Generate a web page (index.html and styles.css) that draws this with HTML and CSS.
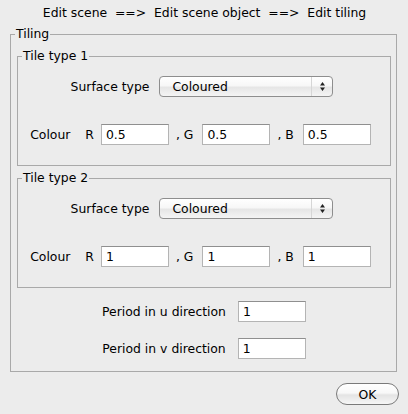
FILE: index.html
```html
<!DOCTYPE html>
<html>
<head>
<meta charset="utf-8">
<link rel="stylesheet" href="styles.css">
</head>
<body>
<div class="title">Edit scene  ==&gt;  Edit scene object  ==&gt;  Edit tiling</div>
<fieldset class="group outer">
  <legend class="outer-legend">Tiling</legend>
  <fieldset class="group tile">
    <legend class="tile-legend">Tile type 1</legend>
    <div class="row surface-row">
      <span class="label">Surface type</span>
      <div class="select"><span class="select-text">Coloured</span><span class="select-arrows"><svg width="7" height="11" viewBox="0 0 7 11"><path d="M3.5 1 L6 4.5 L1 4.5 Z M3.5 10 L6 6.5 L1 6.5 Z" fill="#222"/></svg></span></div>
    </div>
    <div class="row colour-row">
      <span class="colour-label">Colour</span>
      <span class="comp comp-r">R</span>
      <input class="field" value="0.5">
      <span class="comp">, G</span>
      <input class="field" value="0.5">
      <span class="comp">, B</span>
      <input class="field" value="0.5">
    </div>
  </fieldset>
  <fieldset class="group tile tile2">
    <legend class="tile-legend">Tile type 2</legend>
    <div class="row surface-row">
      <span class="label">Surface type</span>
      <div class="select"><span class="select-text">Coloured</span><span class="select-arrows"><svg width="7" height="11" viewBox="0 0 7 11"><path d="M3.5 1 L6 4.5 L1 4.5 Z M3.5 10 L6 6.5 L1 6.5 Z" fill="#222"/></svg></span></div>
    </div>
    <div class="row colour-row">
      <span class="colour-label">Colour</span>
      <span class="comp comp-r">R</span>
      <input class="field" value="1">
      <span class="comp">, G</span>
      <input class="field" value="1">
      <span class="comp">, B</span>
      <input class="field" value="1">
    </div>
  </fieldset>
  <div class="row period-row period-u">
    <span class="label">Period in u direction</span>
    <input class="field" value="1">
  </div>
  <div class="row period-row period-v">
    <span class="label">Period in v direction</span>
    <input class="field" value="1">
  </div>
</fieldset>
<div class="footer">
  <button class="ok">OK</button>
</div>
</body>
</html>
```

FILE: styles.css
```css
html, body {
  margin: 0;
  padding: 0;
  background: #ececec;
}
body {
  font-family: "DejaVu Sans", "Liberation Sans", sans-serif;
  font-size: 12.4px;
  color: #000;
  width: 408px;
  height: 414px;
  overflow: hidden;
}
.title {
  height: 26px;
  line-height: 26px;
  text-align: center;
  white-space: pre;
  padding-left: 1px;
}
.group {
  margin: 0;
  min-width: 0;
  border: 1px solid #a9a9a9;
  box-sizing: border-box;
}
.group > legend {
  padding: 0 1px;
  line-height: 16px;
  height: 16px;
}
.outer {
  margin-left: 10px;
  width: 387px;
  padding: 6px 5px 12px 6px;
}
.outer-legend {
  margin-left: -2px;
}
.tile {
  width: 374px;
  padding: 12px 0 20px 0;
}
.tile-legend {
  margin-left: 4px;
}
.tile2 {
  margin-top: 4px;
}
.row {
  display: flex;
  align-items: center;
  justify-content: center;
}
.surface-row {
  height: 21px;
  gap: 10px;
  padding-right: 4px;
}
.select {
  width: 174px;
  height: 21px;
  box-sizing: border-box;
  border: 1px solid #8e8e8e;
  border-radius: 4px;
  background: linear-gradient(#ffffff 0%, #f7f7f7 45%, #e6e6e6 55%, #f4f4f4 100%);
  display: flex;
  align-items: center;
  position: relative;
}
.select-text {
  padding-left: 12px;
  flex: 1;
}
.select-arrows {
  width: 20px;
  height: 19px;
  border-left: 1px solid #d6d6d6;
  display: flex;
  align-items: center;
  justify-content: center;
}
.colour-row {
  margin-top: 27px;
  height: 21px;
  padding-right: 7px;
}
.colour-label {
  margin-right: 15px;
}
.comp {
  margin-left: 7px;
  margin-right: 9px;
}
.comp-r {
  margin-left: 0;
  margin-right: 7px;
}
.field {
  width: 68px;
  height: 21px;
  box-sizing: border-box;
  border: 1px solid #b4b4b4;
  border-top-color: #8f8f8f;
  background: #fff;
  font-family: "DejaVu Sans", "Liberation Sans", sans-serif;
  font-size: 12.4px;
  color: #000;
  padding: 0 0 0 4px;
  margin: 0;
  outline: none;
}
.period-row {
  gap: 12px;
  height: 21px;
}
.period-u {
  margin-top: 13px;
}
.period-v {
  margin-top: 16px;
}
.footer {
  display: flex;
  justify-content: flex-end;
  padding-right: 9px;
  margin-top: 11px;
}
.ok {
  width: 63px;
  height: 22px;
  margin: 0;
  border: 1px solid #7a7a7a;
  border-radius: 11px;
  background: linear-gradient(#ffffff 0%, #f8f8f8 45%, #e4e4e4 55%, #f6f6f6 100%);
  font-family: "DejaVu Sans", "Liberation Sans", sans-serif;
  font-size: 12.4px;
  color: #000;
  padding: 0;
}
```
